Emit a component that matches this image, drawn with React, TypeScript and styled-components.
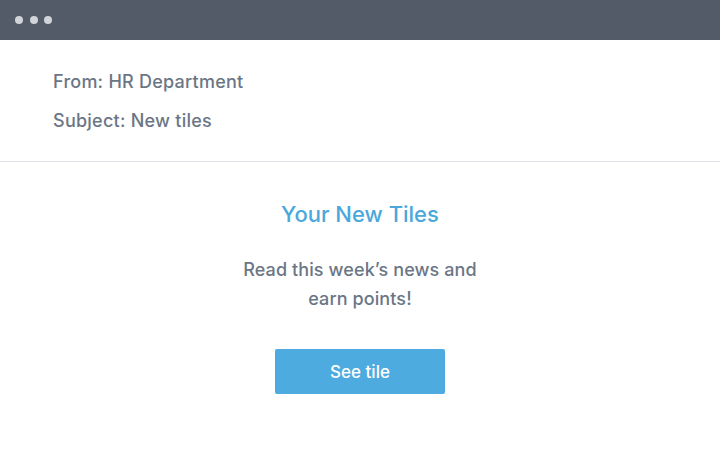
import React from "react";
import styled, { createGlobalStyle } from "styled-components";

const Global = createGlobalStyle`
  html, body { margin: 0; padding: 0; background: #ffffff; }
  body { font-family: Inter, "Liberation Sans", Arial, sans-serif; -webkit-font-smoothing: antialiased; }
`;

const Window = styled.div`
  width: 720px;
  height: 450px;
  display: flex;
  flex-direction: column;
  background: #ffffff;
  overflow: hidden;
`;

const TitleBar = styled.div`
  height: 40px;
  background: #535b68;
  display: flex;
  align-items: center;
  gap: 6.5px;
  padding-left: 15px;
  box-sizing: border-box;
  flex-shrink: 0;
`;

const Dot = styled.span`
  width: 8px;
  height: 8px;
  border-radius: 50%;
  background: #d1d5da;
`;

const Header = styled.div`
  display: flex;
  flex-direction: column;
  gap: 17px;
  padding: 31px 0 0 53px;
  height: 122px;
  box-sizing: border-box;
  border-bottom: 1px solid #dfe3e8;
`;

const MetaLine = styled.div`
  font-size: 18px;
  font-weight: 500;
  letter-spacing: 0.25px;
  line-height: 22px;
  color: #6b7685;
`;

const Body = styled.div`
  display: flex;
  flex-direction: column;
  align-items: center;
  padding-top: 39px;
`;

const Title = styled.h1`
  margin: 0;
  font-size: 22px;
  font-weight: 500;
  line-height: 26px;
  color: #4aa8dc;
`;

const Text = styled.p`
  margin: 28px 0 0;
  width: 252px;
  text-align: center;
  font-size: 18px;
  font-weight: 500;
  letter-spacing: 0.1px;
  line-height: 29px;
  color: #6b7685;
`;

const Button = styled.button`
  margin-top: 36px;
  width: 170px;
  height: 45px;
  border: none;
  border-radius: 2px;
  background: #4eabdf;
  color: #ffffff;
  font-family: Inter, "Liberation Sans", Arial, sans-serif;
  font-size: 17px;
  font-weight: 500;
  cursor: pointer;
`;

export default function App() {
  return (
    <>
      <Global />
      <Window>
        <TitleBar>
          <Dot />
          <Dot />
          <Dot />
        </TitleBar>
        <Header>
          <MetaLine>From: HR Department</MetaLine>
          <MetaLine>Subject: New tiles</MetaLine>
        </Header>
        <Body>
          <Title>Your New Tiles</Title>
          <Text>Read this week’s news and earn points!</Text>
          <Button>See tile</Button>
        </Body>
      </Window>
    </>
  );
}
